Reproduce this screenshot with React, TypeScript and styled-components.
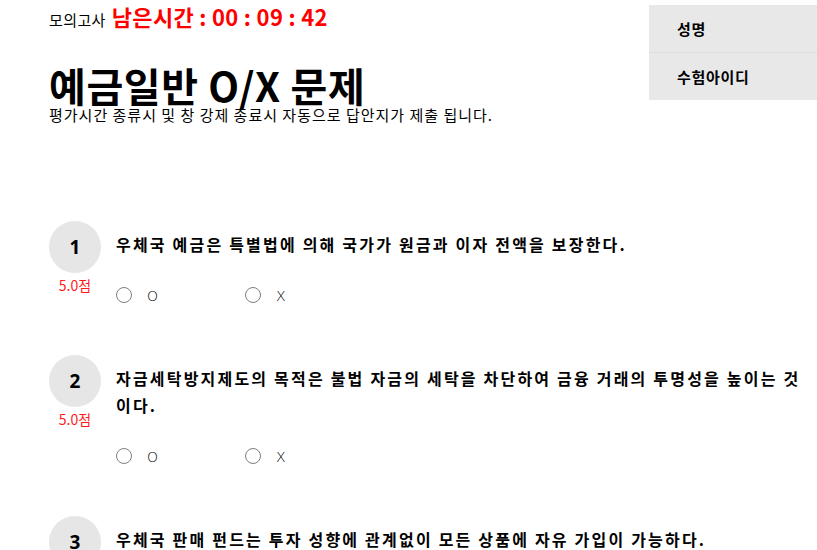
import React from "react";
import styled, { createGlobalStyle } from "styled-components";

type Question = {
  no: number;
  score: string;
  text: string;
};

const questions: Question[] = [
  {
    no: 1,
    score: "5.0점",
    text: "우체국 예금은 특별법에 의해 국가가 원금과 이자 전액을 보장한다.",
  },
  {
    no: 2,
    score: "5.0점",
    text: "자금세탁방지제도의 목적은 불법 자금의 세탁을 차단하여 금융 거래의 투명성을 높이는 것이다.",
  },
  {
    no: 3,
    score: "5.0점",
    text: "우체국 판매 펀드는 투자 성향에 관계없이 모든 상품에 자유 가입이 가능하다.",
  },
];

const App: React.FC = () => {
  return (
    <>
      <GlobalStyle />
      <Page>
        <Header>
          <HeadLeft>
            <TopLine>
              <ExamLabel>모의고사</ExamLabel>
              <Timer>남은시간 : 00 : 09 : 42</Timer>
            </TopLine>
            <Title>예금일반 O/X 문제</Title>
            <Notice>
              평가시간 종류시 및 창 강제 종료시 자동으로 답안지가 제출 됩니다.
            </Notice>
          </HeadLeft>
          <InfoPanel>
            <InfoRow>성명</InfoRow>
            <InfoRow>수험아이디</InfoRow>
          </InfoPanel>
        </Header>

        <QuestionList>
          {questions.map((q) => (
            <QuestionItem key={q.no}>
              <Side>
                <NumberBadge>{q.no}</NumberBadge>
                <Score>{q.score}</Score>
              </Side>
              <Body>
                <QuestionText>{q.text}</QuestionText>
                <Options>
                  {["O", "X"].map((opt) => (
                    <Option key={opt}>
                      <Radio type="radio" name={`q${q.no}`} />
                      <OptionLabel>{opt}</OptionLabel>
                    </Option>
                  ))}
                </Options>
              </Body>
            </QuestionItem>
          ))}
        </QuestionList>
      </Page>
    </>
  );
};

const GlobalStyle = createGlobalStyle`
  html, body {
    margin: 0;
    padding: 0;
    background: #ffffff;
    overflow: hidden;
  }

  body {
    font-family: "Noto Sans CJK KR", "Noto Sans", sans-serif;
    color: #000000;
  }
`;

const Page = styled.div`
  width: 817px;
  height: 550px;
  overflow: hidden;
`;

const Header = styled.div`
  display: flex;
  justify-content: space-between;
  align-items: flex-start;
`;

const HeadLeft = styled.div`
  display: flex;
  flex-direction: column;
  padding-left: 49px;
`;

const TopLine = styled.div`
  display: flex;
  align-items: baseline;
  gap: 6px;
  height: 36px;
`;

const ExamLabel = styled.span`
  font-size: 15px;
  letter-spacing: 0.4px;
`;

const Timer = styled.span`
  font-size: 22px;
  font-weight: 700;
  letter-spacing: 0.3px;
  color: #ff0000;
`;

const Title = styled.h1`
  margin: 29px 0 0;
  font-size: 40px;
  font-weight: 700;
  line-height: 40px;
  letter-spacing: 0.6px;
`;

const Notice = styled.div`
  margin-top: 1px;
  font-size: 15px;
  line-height: 18px;
  letter-spacing: 1px;
`;

const InfoPanel = styled.div`
  margin-top: 5px;
  width: 168px;
  background: #e8e8e8;
  display: flex;
  flex-direction: column;
`;

const InfoRow = styled.div`
  height: 47px;
  display: flex;
  align-items: center;
  padding-left: 28px;
  font-size: 15px;
  font-weight: 700;
  letter-spacing: 0.7px;

  & + & {
    border-top: 1px solid #dcdcdc;
  }
`;

const QuestionList = styled.div`
  display: flex;
  flex-direction: column;
  gap: 51px;
  margin-top: 97px;
  padding-left: 49px;
  padding-right: 12px;
`;

const QuestionItem = styled.div`
  display: flex;
  gap: 15px;
`;

const Side = styled.div`
  width: 52px;
  display: flex;
  flex-direction: column;
  align-items: center;
  flex-shrink: 0;
`;

const NumberBadge = styled.div`
  width: 52px;
  height: 52px;
  border-radius: 50%;
  background: #e6e6e6;
  display: flex;
  align-items: center;
  justify-content: center;
  font-family: "Noto Sans", sans-serif;
  font-size: 19px;
  font-weight: 700;
`;

const Score = styled.div`
  margin-top: 2px;
  font-size: 14px;
  color: #ff1a1a;
`;

const Body = styled.div`
  flex: 1;
  padding-top: 10px;
`;

const QuestionText = styled.div`
  font-size: 16px;
  font-weight: 700;
  line-height: 27px;
  letter-spacing: 2.2px;
`;

const Options = styled.div`
  display: flex;
  margin-top: 28px;
`;

const Option = styled.label`
  width: 129px;
  height: 18px;
  display: flex;
  align-items: center;
  gap: 15px;
`;

const Radio = styled.input`
  appearance: none;
  margin: 0;
  width: 16px;
  height: 16px;
  border: 1.5px solid #808080;
  border-radius: 50%;
  background: #ffffff;
  box-sizing: border-box;
`;

const OptionLabel = styled.span`
  padding-top: 2px;
  font-family: "DejaVu Sans", sans-serif;
  font-size: 14px;
  font-weight: 300;
`;

export default App;
